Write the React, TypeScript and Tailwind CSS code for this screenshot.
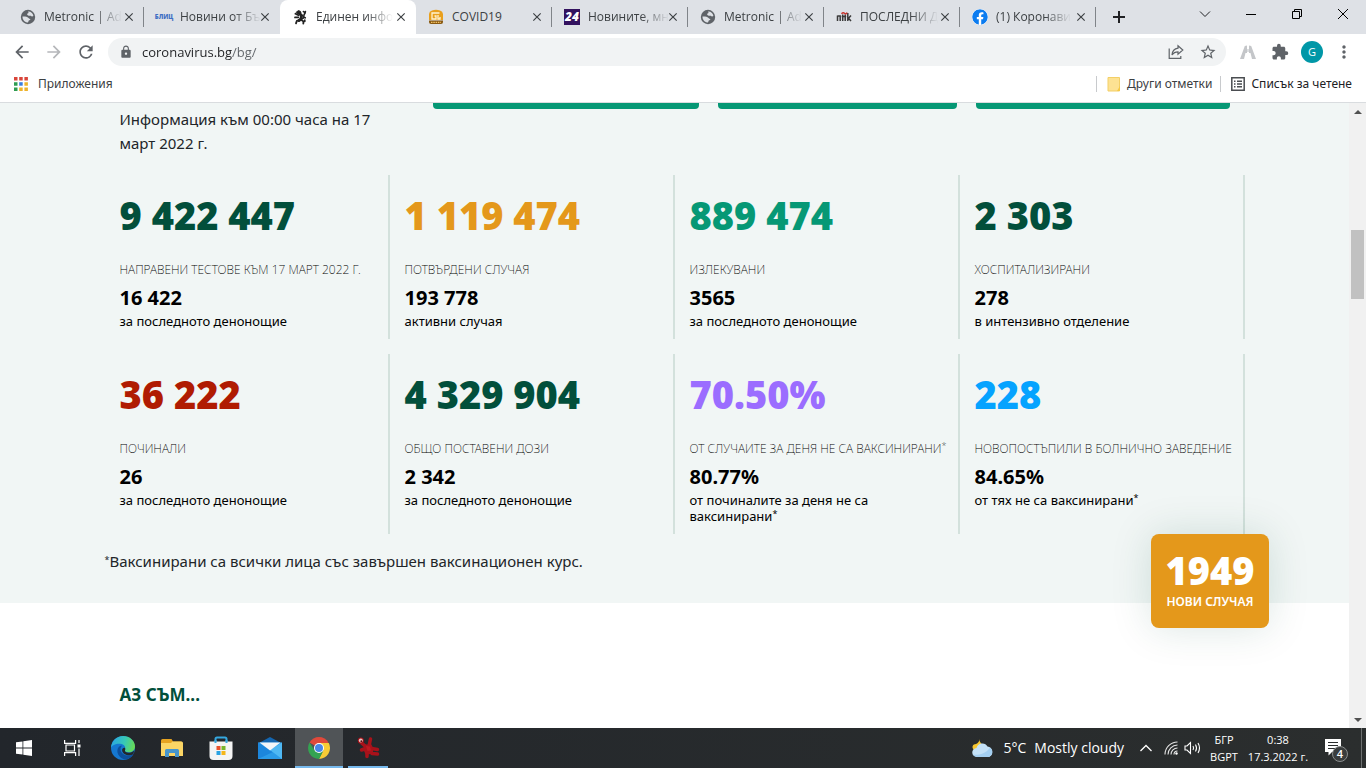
import React from 'react';
import {
  MdArrowBack,
  MdArrowForward,
  MdClose,
  MdExtension,
  MdLock,
  MdMoreVert,
  MdRefresh,
  MdStarBorder,
} from 'react-icons/md';
import { FaFacebook } from 'react-icons/fa';

interface Tab {
  title: string;
  icon: React.ReactNode;
  active?: boolean;
  divider?: boolean;
}

interface Stat {
  value: string;
  color: string;
  label: string;
  labelNote?: boolean;
  sub: string;
  caption: string;
  captionNote?: boolean;
}

const GlobeIcon = () => (
  <svg viewBox="0 0 16 16" className="h-4 w-4">
    <circle cx="8" cy="8" r="7.200" fill="#5f6368" />
    <path d="M8 2.500c2.500-.3 4.800 1.500 5.400 4.200-.8 1-2 .8-2.600 0-.8-.2-1.400.3-2.600-.2C6.800 6 6.800 4.500 8.200 4.300 8.800 3.800 8.400 3 8 2.500z" fill="#dee1e6" />
    <path d="M2.500 7.500c2.200-.2 5 .2 5.700 1.200.6 1 2 .8 2.200 1.700-.4 1-1.600.8-1.900 1.500-.1.900-.5 1.600-1.300 1.600-2.700-.5-4.800-3-4.700-6z" fill="#dee1e6" />
  </svg>
);

const LionIcon = () => (
  <svg viewBox="0 0 16 16" className="h-4 w-4" fill="none" stroke="#222" strokeLinecap="round">
    <path d="M4.500 3 6.500 1.600l2 .8.500 1.600-1.600 1-2-.2z" fill="#222" />
    <path d="M7.500 4.500 9.500 6.500 9 10l-2 1.500" strokeWidth="3" />
    <path d="M6.500 6.200 3.400 4.800M6.200 8.300 3 8.400M6.500 11.300 4.800 12l-.8 2.400M9.500 11l2 1.400-.2 2.200" strokeWidth="1.800" />
    <path d="M10.500 9.500c2.200 0 .8-3 1.700-3.900s.5-2.600-.8-3M13 4.200l.4-1.600M11.800 8.200l1.500.6M12.800 11v1.500" strokeWidth="1.600" />
  </svg>
);

const CovidIcon = () => (
  <svg viewBox="0 0 16 16" className="h-4 w-4" fill="none">
    <path d="M1 5a4 4 0 0 1 3-3.600 12 12 0 0 1 8 0A4 4 0 0 1 15 5v6H1z" fill="#e9a01e" />
    <path d="M11.500 4H4v6h4V7H6.500M10 6v4h2V8" stroke="#fff3d2" strokeWidth="1.300" />
    <path d="M1 11.500h14v1.500a2 2 0 0 1-2 2H3a2 2 0 0 1-2-2z" fill="#8a5a12" />
    <path d="M3 13.300h10" stroke="#f3c368" strokeWidth="1.200" strokeDasharray="1.500 .8" />
  </svg>
);

const tabs: Tab[] = [
  { title: 'Metronic | Ad', icon: <GlobeIcon />, divider: true },
  {
    title: 'Новини от Бъ',
    icon: <span className="text-[6px] leading-4 font-black text-[#3f6fc4]">БЛИЦ</span>,
  },
  { title: 'Единен инфо', icon: <LionIcon />, active: true },
  { title: 'COVID19', icon: <CovidIcon />, divider: true },
  {
    title: 'Новините, мн',
    icon: (
      <span className="h-4 w-4 bg-[#33125f] text-center text-[12px] leading-4 font-black text-white italic">
        24
      </span>
    ),
    divider: true,
  },
  { title: 'Metronic | Ad', icon: <GlobeIcon />, divider: true },
  {
    title: 'ПОСЛЕДНИ Д',
    icon: (
      <svg viewBox="0 0 16 16" className="h-4 w-4" fill="none" stroke="#3a3a3a" strokeWidth="1.500">
        <path d="M1.500 12V6.500M1.500 7h2.700v5M6.700 12V5.500M9.200 12V5.500M5.700 7.500h4.500M11.800 12V4M15 6.500l-2.500 2.700L15 12" />
        <path d="M5.500 4.800q1.500-2 3-.5t2.500-.8" stroke="#c8322b" />
      </svg>
    ),
    divider: true,
  },
  {
    title: '(1) Коронави',
    icon: <FaFacebook className="h-4 w-4 rounded-full bg-white text-[#0c7cf0]" />,
    divider: true,
  },
];

const stats: Stat[] = [
  {
    value: '9 422 447',
    color: 'text-[#024f3b]',
    label: 'НАПРАВЕНИ ТЕСТОВЕ КЪМ 17 МАРТ 2022 Г.',
    sub: '16 422',
    caption: 'за последното денонощие',
  },
  {
    value: '1 119 474',
    color: 'text-[#e4981b]',
    label: 'ПОТВЪРДЕНИ СЛУЧАЯ',
    sub: '193 778',
    caption: 'активни случая',
  },
  {
    value: '889 474',
    color: 'text-[#069875]',
    label: 'ИЗЛЕКУВАНИ',
    sub: '3565',
    caption: 'за последното денонощие',
  },
  {
    value: '2 303',
    color: 'text-[#024f3b]',
    label: 'ХОСПИТАЛИЗИРАНИ',
    sub: '278',
    caption: 'в интензивно отделение',
  },
  {
    value: '36 222',
    color: 'text-[#b01b02]',
    label: 'ПОЧИНАЛИ',
    sub: '26',
    caption: 'за последното денонощие',
  },
  {
    value: '4 329 904',
    color: 'text-[#024f3b]',
    label: 'ОБЩО ПОСТАВЕНИ ДОЗИ',
    sub: '2 342',
    caption: 'за последното денонощие',
  },
  {
    value: '70.50%',
    color: 'text-[#9b6dff]',
    label: 'ОТ СЛУЧАИТЕ ЗА ДЕНЯ НЕ СА ВАКСИНИРАНИ',
    labelNote: true,
    sub: '80.77%',
    caption: 'от починалите за деня не са ваксинирани',
    captionNote: true,
  },
  {
    value: '228',
    color: 'text-[#05a3ff]',
    label: 'НОВОПОСТЪПИЛИ В БОЛНИЧНО ЗАВЕДЕНИЕ',
    sub: '84.65%',
    caption: 'от тях не са ваксинирани',
    captionNote: true,
  },
];

const TabStrip = () => (
  <div className="flex h-[34px] shrink-0 bg-[#dee1e6] pl-2">
    {tabs.map((tab, i) => (
      <div
        key={i}
        className={`relative flex w-[136px] items-center pr-2 pl-3 ${
          tab.active ? 'rounded-t-lg bg-white' : ''
        }`}
      >
        <button className="flex min-w-0 flex-1 items-center gap-2 text-left">
          <span className="flex w-4 shrink-0 justify-center">{tab.icon}</span>
          <span
            className={`text-[12px] leading-5 whitespace-nowrap text-[#3c4043] ${
              tab.title === 'COVID19' ? '' : '[mask-image:linear-gradient(to_right,black_65%,transparent)]'
            }`}
          >
            {tab.title}
          </span>
        </button>
        <button aria-label="Close tab">
          <MdClose className="h-[14px] w-[14px] text-[#3c4043]" />
        </button>
        {tab.divider && <span className="absolute top-[7px] right-0 h-5 w-px bg-[#808489]" />}
      </div>
    ))}
    <button aria-label="New tab" className="flex w-[46px] items-center justify-center">
      <svg viewBox="0 0 12 12" className="h-3 w-3" stroke="#202124" strokeWidth="2">
        <path d="M6 0v12M0 6h12" />
      </svg>
    </button>
    <div className="ml-auto flex h-7">
      <button aria-label="Search tabs" className="flex w-[46px] items-center justify-center">
        <svg viewBox="0 0 12 12" className="h-3 w-3" fill="none" stroke="#202124">
          <path d="m1 3.500 5 5 5-5" />
        </svg>
      </button>
      <button aria-label="Minimize" className="flex w-[46px] items-center justify-center">
        <svg viewBox="0 0 12 12" className="h-3 w-3" stroke="#000">
          <path d="M1 6.500h10" />
        </svg>
      </button>
      <button aria-label="Restore" className="flex w-[46px] items-center justify-center">
        <svg viewBox="0 0 12 12" className="h-3 w-3" fill="none" stroke="#000">
          <path d="M1.500 3.500h7v7h-7zM3.500 3.500v-2h7v7h-2" />
        </svg>
      </button>
      <button aria-label="Close" className="flex w-[46px] items-center justify-center">
        <svg viewBox="0 0 12 12" className="h-3 w-3" stroke="#000">
          <path d="m1 1 10 10M11 1 1 11" />
        </svg>
      </button>
    </div>
  </div>
);

const Toolbar = () => (
  <div className="flex h-9 shrink-0 items-center bg-white px-[6px] text-[#5f6368]">
    <button aria-label="Back" className="flex w-8 justify-center">
      <MdArrowBack className="h-5 w-5" />
    </button>
    <button aria-label="Forward" className="flex w-8 justify-center">
      <MdArrowForward className="h-5 w-5 text-[#b5b7ba]" />
    </button>
    <button aria-label="Reload" className="flex w-8 justify-center">
      <MdRefresh className="h-5 w-5" />
    </button>
    <div className="ml-[6px] flex h-7 flex-1 items-center rounded-full bg-[#f1f3f4] pr-[2px] pl-[11px]">
      <MdLock className="h-[14px] w-[14px]" />
      <input
        aria-label="Address"
        className="ml-[9px] min-w-0 flex-1 bg-[linear-gradient(to_right,#202124_90px,#5f6368_90px)] bg-clip-text text-[13px] leading-5 text-transparent outline-none"
        defaultValue="coronavirus.bg/bg/"
      />
      <button aria-label="Share" className="flex w-8 justify-center">
        <svg viewBox="0 0 16 16" className="h-4 w-4" fill="none" stroke="#5f6368" strokeWidth="1.200">
          <path d="M1.200 4.500v9.800h11.600V12" />
          <path d="M10 1.800 14.800 6 10 10.200V7.800C7.200 7.800 5.400 8.800 4 11c.3-3.800 2.500-6.300 6-6.800z" />
        </svg>
      </button>
      <button aria-label="Bookmark" className="flex w-8 justify-center">
        <MdStarBorder className="h-[18px] w-[18px]" />
      </button>
    </div>
    <div className="ml-[6px] flex items-center">
      <button aria-label="Extension" className="flex w-8 justify-center">
        <svg viewBox="0 0 16 16" className="h-4 w-4" fill="#c4c6c9">
          <path d="M4.800 2 7 1.500V9H5.500L4 15H0zM11.200 2 9 1.500V9h1.500L12 15h4z" />
          <path d="M7 5h2v3H7z" fill="#dcdee0" />
        </svg>
      </button>
      <button aria-label="Extensions" className="flex w-8 justify-center">
        <MdExtension className="h-[18px] w-[18px]" />
      </button>
      <button aria-label="Profile" className="flex w-8 justify-center">
        <span className="h-[22px] w-[22px] rounded-full bg-[#0097a7] text-center text-[11px] leading-[22px] text-white">
          G
        </span>
      </button>
      <button aria-label="Menu" className="flex w-8 justify-center">
        <MdMoreVert className="h-5 w-5" />
      </button>
    </div>
  </div>
);

const BookmarksBar = () => (
  <div className="flex h-[33px] shrink-0 items-center border-b border-[#d9dcdf] bg-white px-[14px] pb-[5px] font-['Noto_Sans',sans-serif] text-[12px] leading-5 text-[#3c4043]">
    <a href="#apps" className="flex items-center gap-[10px]">
      <svg viewBox="0 0 14 14" className="h-[14px] w-[14px]">
        <path d="M0 0h3.500v3.500H0zM5.200 0h3.500v3.500H5.200zM10.400 0h3.500v3.500h-3.500z" fill="#d9453a" />
        <path d="M0 5.200h3.500v3.500H0zM0 10.400h3.500v3.500H0z" fill="#2f9c51" />
        <path d="M5.200 5.200h3.500v3.500H5.200z" fill="#3a7de0" />
        <path d="M10.400 5.200h3.500v3.500h-3.500zM5.200 10.400h3.500v3.500H5.200zM10.400 10.400h3.500v3.500h-3.500z" fill="#eeb32b" />
      </svg>
      Приложения
    </a>
    <div className="ml-auto flex items-center">
      <span className="h-4 w-px bg-[#c8cacd]" />
      <a href="#other" className="flex items-center gap-[6px] pr-2 pl-[10px]">
        <svg viewBox="0 0 14 16" className="h-4 w-[14px]">
          <path d="M1 1.500h11.500V15H1z" fill="#fde293" stroke="#f3cf66" />
          <path d="m10 15 3-5v5z" fill="#f6c945" />
        </svg>
        Други отметки
      </a>
      <span className="h-4 w-px bg-[#c8cacd]" />
      <a href="#reading" className="flex items-center gap-[6px] pl-[10px] text-[#202124]">
        <svg viewBox="0 0 14 14" className="h-[14px] w-[14px]" fill="none" stroke="#4a4d51" strokeWidth="1.500">
          <path d="M.8.8h12.400v12.400H.8zM3 4.300h1.500M6 4.300h5M3 7h1.500M6 7h5M3 9.700h1.500M6 9.700h5" />
        </svg>
        Списък за четене
      </a>
    </div>
  </div>
);

const StatCard = ({ stat }: { stat: Stat }) => (
  <div className="border-r-2 border-[#d3e1dc] px-[15px] pt-4 pb-[10px] text-black">
    <div className={`text-[38px] leading-[48px] font-black ${stat.color}`}>{stat.value}</div>
    <div className="mt-[21px] text-[12px] leading-5 font-extralight whitespace-nowrap">
      {stat.label}
      {stat.labelNote && <sup className="text-[9px]">*</sup>}
    </div>
    <div className="mt-[6px] text-[20px] leading-6 font-bold">{stat.sub}</div>
    <div className="mt-[3px] text-[13px] leading-4">
      {stat.caption}
      {stat.captionNote && <sup className="text-[9px]">*</sup>}
    </div>
  </div>
);

const Page = () => (
  <main className="relative min-w-0 flex-1 overflow-hidden bg-white font-['Noto_Sans',sans-serif]">
    <section className="bg-[#f1f6f5] pb-[30px]">
      <div className="mx-auto max-w-[1140px]">
        <div className="flex pr-[15px]">
          <p className="w-[285px] px-[15px] pt-1 text-[15px] leading-6 text-[#212529]">
            Информация към 00:00 часа на 17 март 2022 г.
          </p>
          <div className="ml-[43px] grid flex-1 grid-cols-[266fr_239fr_254fr] gap-[19px]">
            <div className="h-[6px] rounded-b bg-[#069875]" />
            <div className="h-[6px] rounded-b bg-[#069875]" />
            <div className="h-[6px] rounded-b bg-[#069875]" />
          </div>
        </div>
        <div className="mt-5 grid grid-cols-4 gap-y-[15px]">
          {stats.map((stat) => (
            <StatCard key={stat.value} stat={stat} />
          ))}
        </div>
        <p className="mt-[15px] text-[15px] leading-6 text-[#212529]">
          <sup className="text-[9px]">*</sup>Ваксинирани са всички лица със завършен ваксинационен курс.
        </p>
      </div>
    </section>
    <section className="mx-auto max-w-[1140px] px-[15px] pt-[78px]">
      <h2 className="text-[17px] leading-7 font-bold text-[#024f3b]">АЗ СЪМ...</h2>
    </section>

    {/* New cases badge */}
    <div className="absolute right-20 bottom-[100px] h-[94px] w-[118px] rounded-lg bg-[#e4981b] pt-[14px] text-center text-white shadow-[0_0_40px_rgba(2,79,59,0.15)]">
      <div className="text-[38px] leading-[44px] font-black">1949</div>
      <div className="mt-[2px] text-[12px] leading-4 font-semibold">НОВИ СЛУЧАЯ</div>
    </div>
  </main>
);

const Scrollbar = () => (
  <div className="flex w-[17px] shrink-0 flex-col items-center bg-[#f1f1f1]">
    <button aria-label="Scroll up" className="flex h-[17px] w-full items-center justify-center">
      <svg viewBox="0 0 8 4" className="h-1 w-2" fill="#505050">
        <path d="M0 4 4 0l4 4z" />
      </svg>
    </button>
    <div className="mt-[110px] h-[69px] w-[13px] bg-[#c1c1c1]" />
    <button aria-label="Scroll down" className="mt-auto flex h-[17px] w-full items-center justify-center">
      <svg viewBox="0 0 8 4" className="h-1 w-2" fill="#505050">
        <path d="M0 0h8L4 4z" />
      </svg>
    </button>
  </div>
);

const StartIcon = () => (
  <svg viewBox="0 0 16 16" className="h-4 w-4" fill="#fff">
    <path d="M0 2.300 6.500 1.400v6.200H0zM7.300 1.300 16 0v7.600H7.300zM0 8.400h6.500v6.200L0 13.700zM7.300 8.400H16V16l-8.700-1.300z" />
  </svg>
);

const TaskViewIcon = () => (
  <svg viewBox="0 0 17 16" className="h-4 w-[17px]" fill="none" stroke="#fff" strokeWidth="1.200">
    <path d="M.6 0v3.400h11V0M.6 16v-3.400h11V16M2 5h8.500v6H2zM15 0v3M15 8.500V16" />
    <path d="M13.500 4.500h3v3h-3z" fill="#fff" stroke="none" />
  </svg>
);

const EdgeIcon = () => (
  <svg viewBox="0 0 24 24" className="h-6 w-6">
    <defs>
      <linearGradient id="edgeTop" x1="0" y1="0.3" x2="1" y2="0.5">
        <stop offset="0" stopColor="#2aa5e4" />
        <stop offset="0.55" stopColor="#37c8b6" />
        <stop offset="1" stopColor="#68db55" />
      </linearGradient>
    </defs>
    <circle cx="12" cy="12" r="12" fill="#1577cf" />
    <path d="M0 11.500C.6 5 5.600 0 12 0c7 0 12 5 12 10.300 0 4-3 6-6.300 6-3 0-4.700-1.300-4.200-2.300 1.500-1.500 1-6-4.500-6.300C4.500 7.400 1 9.500 0 11.500z" fill="url(#edgeTop)" />
    <path d="M9.500 9.700c-5 2.300-4 10.500 2.800 13.300 4 1 8-1.400 10-4.600-5 2.500-12.500.4-12.800-5 0-1.600.5-2.700 1.500-3.600z" fill="#0d4f9b" />
    <path d="M14 14.200c-.5 1.100 1 2.500 4 2.500 2.300 0 4.200-.9 5.300-2.500l-1 4c-4 2.400-11 .5-11.200-4 0-1.700 1-2.700 2.600-2.500.8.600.8 1.700.3 2.500z" fill="#23272b" />
  </svg>
);

const ExplorerIcon = () => (
  <svg viewBox="0 0 22 18" className="h-[18px] w-[22px]">
    <path d="M0 1.500A1.500 1.500 0 0 1 1.500 0h9l1.500 2.500H20.500V6H0z" fill="#e6a321" />
    <path d="M0 4h10l1.500-1.500h9A1.500 1.500 0 0 1 22 4v13H0z" fill="#fbd565" />
    <path d="M4 18v-6.500A1.500 1.500 0 0 1 5.500 10h11a1.500 1.500 0 0 1 1.500 1.500V18h-4v-4H8v4z" fill="#4695cc" />
  </svg>
);

const StoreIcon = () => (
  <svg viewBox="0 0 24 24" className="h-6 w-6">
    <path d="M6.500 7V3A1.500 1.500 0 0 1 8 1.500h8A1.500 1.500 0 0 1 17.500 3v4" fill="none" stroke="#35a8e0" strokeWidth="2" />
    <path d="M.5 5.500h23V20a4 4 0 0 1-4 4h-15a4 4 0 0 1-4-4z" fill="#f4f4f4" />
    <path d="M6.500 7V4M17.500 7V4" stroke="#35a8e0" strokeWidth="2" />
    <path d="M7.500 10h4v4h-4z" fill="#e9512b" />
    <path d="M12.500 10h4v4h-4z" fill="#79b52c" />
    <path d="M7.500 15h4v4h-4z" fill="#2aa2e2" />
    <path d="M12.500 15h4v4h-4z" fill="#f5b619" />
  </svg>
);

const MailIcon = () => (
  <svg viewBox="0 0 24 22" className="h-[22px] w-6">
    <path d="M0 6.500 12 0l12 6.500z" fill="#1466b0" />
    <path d="M0 5.500h24V22H0z" fill="#2b9be8" />
    <path d="M0 5.500 15 15 0 22z" fill="#1c86dc" />
    <path d="M24 5.500V22L12 13z" fill="#4fb8f3" />
    <path d="M1.500 5.500h21L12 13.500z" fill="#f3f6f9" />
  </svg>
);

const ChromeIcon = () => (
  <svg viewBox="0 0 22 22" className="h-[22px] w-[22px]">
    <path d="M11 11 1.500 5.500A11 11 0 0 1 20.500 5.500z" fill="#e0493b" />
    <path d="M11 11V6h9.800A11 11 0 0 1 11 22l4.300-8.500z" fill="#f8cc36" />
    <path d="M11 11l4.300 2.500L11 22A11 11 0 0 1 1.500 5.500l5.200 8z" fill="#34a352" />
    <circle cx="11" cy="11" r="5" fill="#fff" />
    <circle cx="11" cy="11" r="4" fill="#4a86e8" />
  </svg>
);

const SplatIcon = () => (
  <svg viewBox="0 0 24 24" className="h-6 w-6">
    <path
      d="M4 5.500 9 10M14.500 3 13 10M13 12l8.500 1.500M5.500 14 11 12M11 12v8.500M14 13l2 4.500 5.500.5"
      fill="none"
      stroke="#a8121a"
      strokeWidth="3.500"
      strokeLinecap="round"
      strokeLinejoin="round"
    />
    <path d="M8 8.500h7.500l2 5-1.500 4-6 1.500-2-4z" fill="#a8121a" />
    <path d="m10 10 4 .5 1 4-3.500.5z" fill="#bd1a20" />
    <circle cx="4.800" cy="4.600" r="3" fill="#a8121a" />
    <circle cx="4.800" cy="4.600" r="2" fill="#e8c4c2" />
    <circle cx="5.300" cy="5.200" r=".9" fill="#5a0b0d" />
  </svg>
);

const apps = [
  { name: 'Edge', icon: <EdgeIcon />, style: '' },
  { name: 'Explorer', icon: <ExplorerIcon />, style: '' },
  { name: 'Store', icon: <StoreIcon />, style: '' },
  { name: 'Mail', icon: <MailIcon />, style: '' },
  { name: 'Chrome', icon: <ChromeIcon />, style: 'bg-[#505457]' },
  { name: 'Splat', icon: <SplatIcon />, style: '' },
];

const Taskbar = () => (
  <footer className="flex h-10 shrink-0 bg-linear-to-r from-[#22262b] to-[#2b2e2e] text-white">
    <button aria-label="Start" className="flex w-12 items-center justify-center">
      <StartIcon />
    </button>
    <button aria-label="Task view" className="flex w-12 items-center justify-center">
      <TaskViewIcon />
    </button>
    <div className="ml-[3px] flex gap-px">
      {apps.map((app) => (
        <button
          key={app.name}
          aria-label={app.name}
          className={`relative flex w-12 items-center justify-center ${app.style}`}
        >
          {app.icon}
          {app.name === 'Chrome' && <span className="absolute inset-x-0 bottom-0 h-[2px] bg-[#76b9ed]" />}
          {app.name === 'Splat' && <span className="absolute inset-x-1 bottom-0 h-[2px] bg-[#76b9ed]" />}
        </button>
      ))}
    </div>
    <div className="ml-auto flex items-center">
      <button className="flex items-center gap-2 text-[14px] leading-5 whitespace-nowrap">
        <svg viewBox="0 0 24 20" className="h-5 w-6">
          <path d="M8.500 1c0 4 3 6.500 6.500 6.500L13 12H3C0 9 2 6 5 6 7 5 8.500 3.500 8.500 1z" fill="#f6c630" />
          <path d="M6 19a4.500 4.500 0 0 1-.5-9A6 6 0 0 1 16.500 8.500 5.500 5.500 0 0 1 18 19z" fill="#c4e1f7" />
          <path d="M6 19a4.500 4.500 0 0 1-4-2.500c4 1 13-.5 17-7A5.500 5.500 0 0 1 18 19z" fill="#a4cff1" />
        </svg>
        <span>5°C</span>
        <span>Mostly cloudy</span>
      </button>
      <button aria-label="Hidden icons" className="ml-4">
        <svg viewBox="0 0 12 8" className="h-2 w-3" fill="none" stroke="#fff" strokeWidth="1.300">
          <path d="m.5 7 5.500-5.500L11.500 7" />
        </svg>
      </button>
      <button aria-label="Network" className="ml-3">
        <svg viewBox="0 0 14 14" className="h-[14px] w-[14px]" fill="none" stroke="#e6e6e6" strokeWidth="1.100">
          <path d="M1 13.500A12.500 12.500 0 0 1 13.500 1M4 13.500A9.500 9.500 0 0 1 13.500 4M7 13.500A6.500 6.500 0 0 1 13.500 7M10 13.500A3.500 3.500 0 0 1 13.500 10" />
          <circle cx="12.500" cy="12.500" r="1.200" fill="#fff" stroke="none" />
        </svg>
      </button>
      <button aria-label="Volume" className="ml-[6px]">
        <svg viewBox="0 0 18 14" className="h-[14px] w-[18px]" fill="none" stroke="#fff" strokeWidth="1.100">
          <path d="M1 5h2l3.500-3.500v11L3 9H1zM9 5q1.200 2 0 4M11.500 3.500q2 3.500 0 7M14 2q3 5 0 10" />
        </svg>
      </button>
      <button className="ml-[6px] w-8 text-center text-[11px] leading-[17px]">
        БГР
        <br />
        BGPT
      </button>
      <button className="ml-[6px] w-[64px] text-center text-[11px] leading-[17px] whitespace-nowrap">
        0:38
        <br />
        17.3.2022 г.
      </button>
      <button aria-label="Notifications" className="relative mr-[13px] ml-[14px] h-6 w-6">
        <svg viewBox="0 0 24 24" className="h-6 w-6">
          <path d="M1 3h16v13H8l-3.500 3.500V16H1z" fill="#fff" />
          <path d="M4 6.500h10M4 9.500h10M4 12.500h7" stroke="#2b2e2e" />
        </svg>
        <span className="absolute right-0 -bottom-[2px] h-4 w-4 rounded-full border border-[#8b8e8e] bg-[#3a3d3d] text-center text-[11px] leading-[14px] font-semibold">
          4
        </span>
      </button>
      <span className="mr-1 h-10 w-px bg-[#6d7070]" />
    </div>
  </footer>
);

const App: React.FC = () => {
  return (
    <div className="flex h-screen flex-col overflow-hidden font-['Open_Sans','Noto_Sans',sans-serif]">
      <TabStrip />
      <Toolbar />
      <BookmarksBar />
      <div className="flex min-h-0 flex-1">
        <Page />
        <Scrollbar />
      </div>
      <Taskbar />
    </div>
  );
};

export default App;
